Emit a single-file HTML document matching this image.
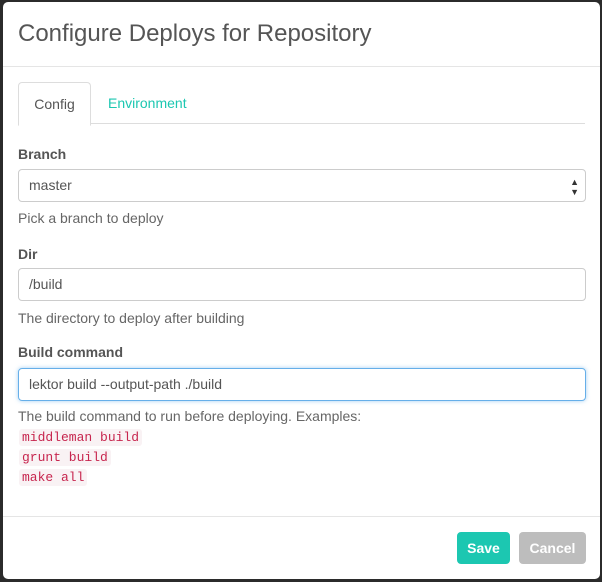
<!DOCTYPE html>
<html><head><style>
body{margin:0;width:602px;height:582px;background:#2b2b2b;font-family:"Liberation Sans",sans-serif;overflow:hidden;position:relative;color:#555}
.m{position:absolute;left:3px;top:2px;width:597px;height:577px;background:#fff;border-radius:5px}
.a{position:absolute}
h1{position:absolute;left:15px;top:18px;margin:0;font-size:24px;font-weight:normal;color:#555}
.hr{position:absolute;left:0;width:597px;height:1px;background:#e5e5e5}
.tab{position:absolute;left:15px;top:80px;width:71px;height:42px;border:1px solid #ddd;border-bottom:1px solid #fff;border-radius:4px 4px 0 0;background:#fff;font-size:14px;line-height:42px;text-align:center;color:#555}
.lbl{position:absolute;left:15px;font-size:14px;font-weight:bold;color:#555}
.help{position:absolute;left:15px;font-size:14px;color:#666}
.in{position:absolute;left:15px;width:565px;height:31px;border:1px solid #ccc;border-radius:4px;font-size:14px;line-height:31px;padding-left:10px;box-sizing:content-box;width:556px;color:#555}
code{position:absolute;left:16px;font-family:"Liberation Mono",monospace;font-size:13px;color:#c7254e;background:#f9f2f4;padding:1px 3px;border-radius:3px}
.btn{position:absolute;top:530px;height:32px;border-radius:4px;color:#fff;font-size:14px;font-weight:bold;line-height:32px;text-align:center}
</style></head><body>
<div class="m">
<h1>Configure Deploys for Repository</h1>
<div class="hr" style="top:64px"></div>
<div class="hr" style="top:121px;left:15px;width:567px;background:#ddd"></div>
<div class="tab">Config</div>
<div class="a" style="left:105px;top:93px;font-size:14px;color:#1cc7b1">Environment</div>
<div class="lbl" style="top:144px">Branch</div>
<div class="in" style="top:167px">master<span style="position:absolute;right:6px;top:0;font-size:9px;line-height:10px;top:7px;color:#333">▲<br>▼</span></div>
<div class="help" style="top:208px">Pick a branch to deploy</div>
<div class="lbl" style="top:244px">Dir</div>
<div class="in" style="top:266px">/build</div>
<div class="help" style="top:308px">The directory to deploy after building</div>
<div class="lbl" style="top:342px">Build command</div>
<div class="in" style="top:366px;border-color:#66afe9;box-shadow:0 0 4px rgba(102,175,233,.6)">lektor build --output-path ./build</div>
<div class="help" style="top:406px">The build command to run before deploying. Examples:</div>
<code style="top:427px">middleman build</code>
<code style="top:447px">grunt build</code>
<code style="top:467px">make all</code>
<div class="hr" style="top:514px"></div>
<div class="btn" style="left:454px;width:53px;background:#1cc7b1">Save</div>
<div class="btn" style="left:516px;width:67px;background:#bdbdbd">Cancel</div>
</div>
</body></html>
